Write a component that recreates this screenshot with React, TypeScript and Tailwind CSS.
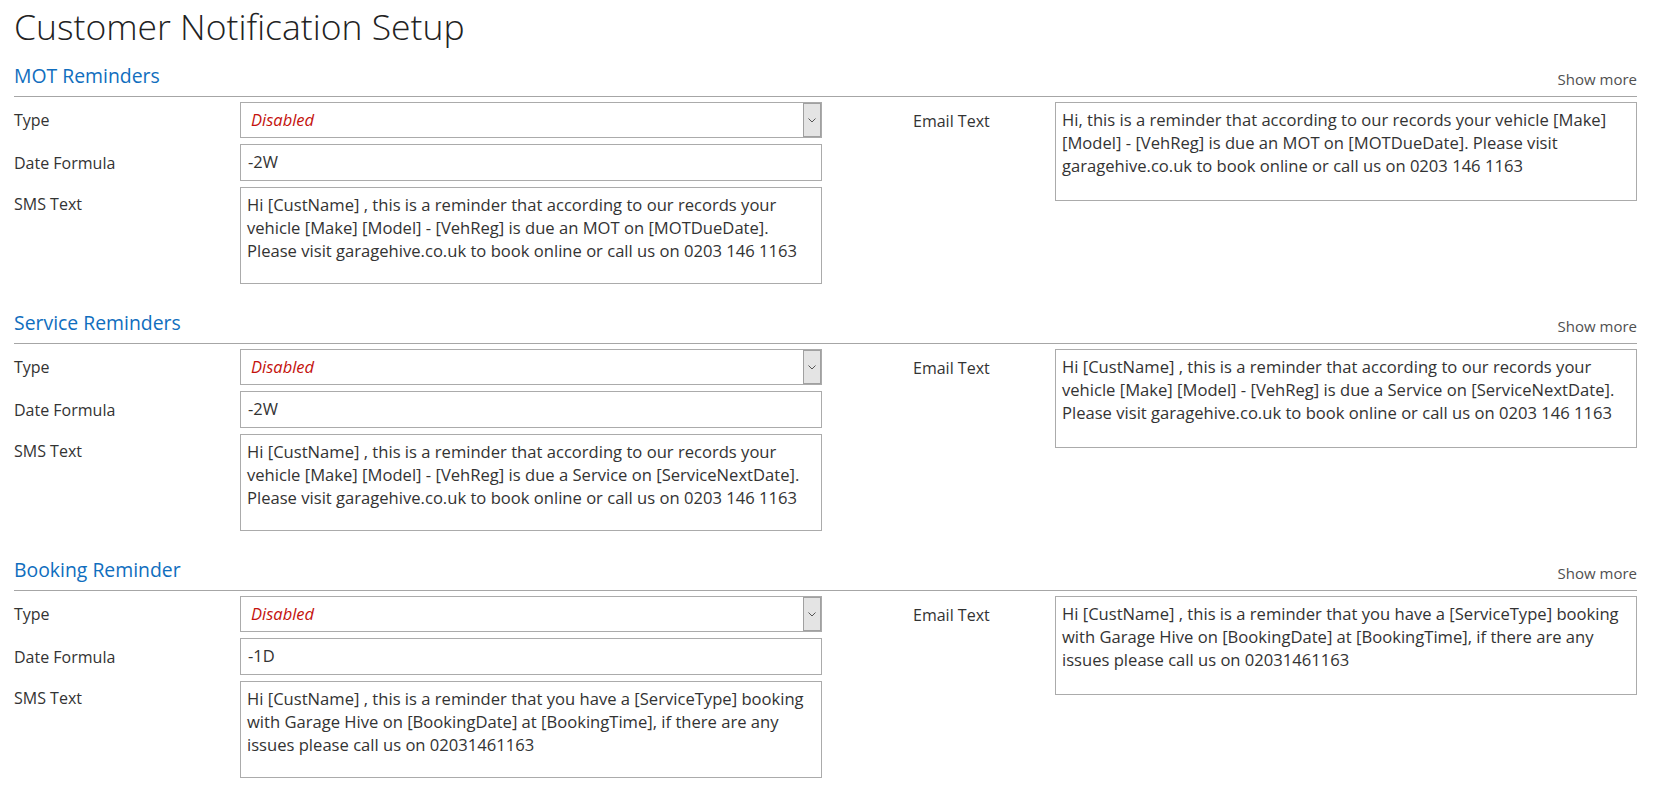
import React from 'react'

type Reminder = {
  title: string
  type: string
  formula: string
  sms: string[]
  email: string[]
}

const reminders: Reminder[] = [
  {
    title: 'MOT Reminders',
    type: 'Disabled',
    formula: '-2W',
    sms: [
      'Hi [CustName] , this is a reminder that according to our records your',
      'vehicle [Make] [Model] - [VehReg] is due an MOT on [MOTDueDate].',
      'Please visit garagehive.co.uk to book online or call us on 0203 146 1163',
    ],
    email: [
      'Hi, this is a reminder that according to our records your vehicle [Make]',
      '[Model] - [VehReg] is due an MOT on [MOTDueDate]. Please visit',
      'garagehive.co.uk to book online or call us on 0203 146 1163',
    ],
  },
  {
    title: 'Service Reminders',
    type: 'Disabled',
    formula: '-2W',
    sms: [
      'Hi [CustName] , this is a reminder that according to our records your',
      'vehicle [Make] [Model] - [VehReg] is due a Service on [ServiceNextDate].',
      'Please visit garagehive.co.uk to book online or call us on 0203 146 1163',
    ],
    email: [
      'Hi [CustName] , this is a reminder that according to our records your',
      'vehicle [Make] [Model] - [VehReg] is due a Service on [ServiceNextDate].',
      'Please visit garagehive.co.uk to book online or call us on 0203 146 1163',
    ],
  },
  {
    title: 'Booking Reminder',
    type: 'Disabled',
    formula: '-1D',
    sms: [
      'Hi [CustName] , this is a reminder that you have a [ServiceType] booking',
      'with Garage Hive on [BookingDate] at [BookingTime], if there are any',
      'issues please call us on 02031461163',
    ],
    email: [
      'Hi [CustName] , this is a reminder that you have a [ServiceType] booking',
      'with Garage Hive on [BookingDate] at [BookingTime], if there are any',
      'issues please call us on 02031461163',
    ],
  },
]

function Label({ children, className = '' }: { children: React.ReactNode; className?: string }) {
  return <div className={`text-[16px] leading-[22px] text-[#333] ${className}`}>{children}</div>
}

function TextBox({ lines, height }: { lines: string[]; height: string }) {
  return (
    <div className={`${height} w-[582px] border border-[#ababab] px-[6px] pt-[5px] text-[16.6px] leading-[23px] text-[#333] whitespace-nowrap`}>
      {lines.map((l, i) => (
        <div key={i}>{l}</div>
      ))}
    </div>
  )
}

function Section({ r, first }: { r: Reminder; first: boolean }) {
  return (
    <section>
      {/* header with divider */}
      <div
        className={`${first ? 'h-[52px]' : 'h-[60px]'} flex items-end justify-between pb-[7px] border-b border-[#a6a6a6]`}
      >
        <h2 className="text-[19.4px] leading-[26px] text-[#106ebe]">{r.title}</h2>
        <span className="text-[15px] leading-[20px] text-[#505050]">Show more</span>
      </div>

      <div className="flex pt-[5px]">
        {/* left column */}
        <div className="flex flex-col gap-[6px]">
          <div className="flex items-center">
            <Label className="w-[226px]">Type</Label>
            <div className="h-[36px] w-[582px] flex items-center border border-[#ababab]">
              <span className="flex-1 pl-[10px] italic text-[16.5px] text-[#c4120d]">{r.type}</span>
              <div className="h-[34px] w-[18px] flex items-center justify-center border border-[#a0a0a0] bg-[#e4e4e4]">
                <svg width="8" height="5" viewBox="0 0 8 5" fill="none">
                  <path d="M0.5 0.5L4 4L7.5 0.5" stroke="#555" strokeWidth="1" />
                </svg>
              </div>
            </div>
          </div>
          <div className="flex items-center">
            <Label className="w-[226px]">Date Formula</Label>
            <div className="h-[37px] w-[582px] flex items-center border border-[#ababab] pl-[7px] text-[16.5px] text-[#333]">
              {r.formula}
            </div>
          </div>
          <div className="flex items-start">
            <Label className="w-[226px] pt-[6px]">SMS Text</Label>
            <TextBox lines={r.sms} height="h-[97px]" />
          </div>
        </div>

        {/* right column */}
        <div className="ml-[91px] flex items-start">
          <Label className="w-[142px] pt-[8px]">Email Text</Label>
          <TextBox lines={r.email} height="h-[99px]" />
        </div>
      </div>
    </section>
  )
}

export default function App() {
  return (
    <div
      className="min-h-screen bg-white pl-[14px] pr-[23px]"
      style={{ fontFamily: '"Open Sans", "Noto Sans", sans-serif' }}
    >
      <h1 className="pt-[7px] text-[35.5px] leading-[38px] font-light text-[#222]">Customer Notification Setup</h1>
      {reminders.map((r, i) => (
        <Section key={r.title} r={r} first={i === 0} />
      ))}
    </div>
  )
}
